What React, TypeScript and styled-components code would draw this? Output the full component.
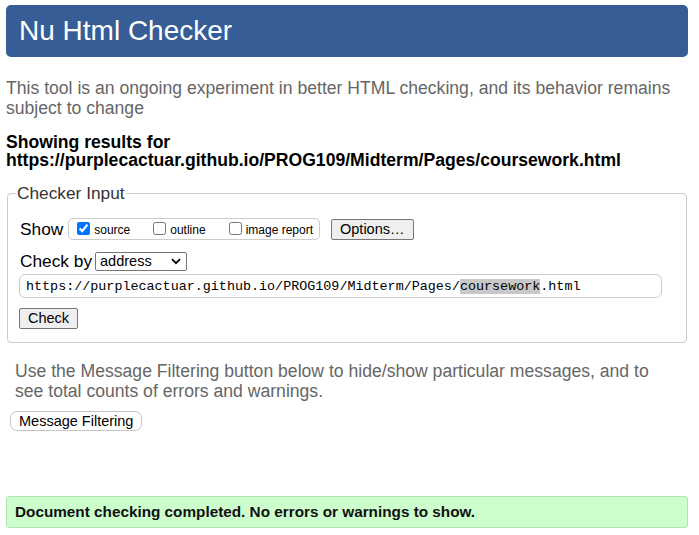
import React from "react";
import styled, { createGlobalStyle } from "styled-components";

const GlobalStyle = createGlobalStyle`
  html, body { margin: 0; padding: 0; background: #fff; }
  body { font-family: "Liberation Sans", Arial, sans-serif; color: #000; }
`;

const Page = styled.div`
  padding: 5px 11px 0 6px;
`;

const Header = styled.h1`
  margin: 0;
  height: 52px;
  line-height: 52px;
  padding-left: 13px;
  background: #365d95;
  color: #fff;
  font-size: 28px;
  font-weight: normal;
  border-radius: 5px;
`;

const Intro = styled.p<{ $indent?: number; $top?: number }>`
  margin: ${(p) => p.$top ?? 0}px 0 0;
  padding: 0 ${(p) => (p.$indent ? 20 : 0)}px 0 ${(p) => p.$indent ?? 0}px;
  color: #666;
  font-size: 17.6px;
  line-height: 20px;
`;

const Results = styled.h2`
  margin: 15px 0 0;
  font-size: 17.6px;
  font-weight: bold;
  line-height: 18px;
`;

const Fieldset = styled.fieldset`
  margin: 14px 1px 0 1px;
  padding: 14px 11px 13px 12px;
  border: 1px solid #ccc;
  border-radius: 4px;
  min-width: 0;
`;

const Legend = styled.legend`
  margin-left: -4px;
  padding: 0 1px;
  font-size: 17.3px;
  color: #333;
`;

const Row = styled.div<{ $gap?: number }>`
  display: flex;
  align-items: center;
  margin-top: ${(p) => p.$gap ?? 0}px;
`;

const Label = styled.span`
  font-size: 17.3px;
  margin-right: 2px;
`;

const CheckGroup = styled.div`
  display: flex;
  align-items: center;
  height: 20px;
  padding: 0 6px 0 4px;
  border: 1px solid #ccc;
  border-radius: 5px;
  margin-left: 3px;
`;

const CheckLabel = styled.label<{ $first?: boolean }>`
  display: flex;
  align-items: center;
  font-size: 12px;
  margin-left: ${(p) => (p.$first ? 0 : 19)}px;
  padding-top: 2px;
`;

const Box = styled.input`
  width: 13px;
  height: 13px;
  margin: -3px 4px 0 4px;
`;

const Button = styled.button<{ $round?: boolean }>`
  font-family: "Liberation Sans", Arial, sans-serif;
  font-size: 14.5px;
  color: #000;
  height: 21px;
  padding: 0 8px;
  background: ${(p) => (p.$round ? "#fff" : "#efefef")};
  border: 1px solid ${(p) => (p.$round ? "#c4c4c4" : "#767676")};
  border-radius: ${(p) => (p.$round ? "7px" : "2px")};
  line-height: 19px;
`;

const OptionsButton = styled(Button)`
  margin-left: 11px;
`;

const SelectWrap = styled.span`
  position: relative;
  display: inline-flex;
  align-items: center;
  margin-left: 1px;
`;

const Select = styled.select`
  appearance: none;
  -webkit-appearance: none;
  width: 92px;
  height: 19px;
  padding: 0 0 0 4px;
  font-family: "Liberation Sans", Arial, sans-serif;
  font-size: 14.5px;
  color: #000;
  background: #fff;
  border: 1px solid #767676;
  border-radius: 2px;
  line-height: 17px;
`;

const Chevron = styled.svg`
  position: absolute;
  right: 6px;
  top: 6px;
  pointer-events: none;
`;

const UrlField = styled.div`
  margin: 2px 13px 0 -1px;
  height: 24px;
  box-sizing: border-box;
  border: 1px solid #ccc;
  border-radius: 6px;
  padding: 0 6px;
  display: flex;
  align-items: center;
  font-family: "Liberation Mono", "DejaVu Sans Mono", monospace;
  font-size: 13.4px;
  white-space: nowrap;
`;

const Mark = styled.span`
  background: #c8c8c8;
`;

const CheckButton = styled(Button)`
  margin: 10px 0 0 -1px;
`;

const Filtering = styled.div`
  margin-top: 18px;
`;

const FilterButton = styled(Button)`
  margin: 10px 0 0 4px;
  height: 20px;
  line-height: 18px;
`;

const Success = styled.div`
  margin-top: 65px;
  height: 32px;
  box-sizing: border-box;
  padding-left: 8px;
  display: flex;
  align-items: center;
  background: #ccffcc;
  border: 1px solid #b8e0b8;
  border-radius: 3px;
  font-size: 15.3px;
  font-weight: bold;
  color: #111;
`;

export default function App() {
  return (
    <>
      <GlobalStyle />
      <Page>
        <Header>Nu Html Checker</Header>
        <Intro $top={21}>
          This tool is an ongoing experiment in better HTML checking, and its behavior remains subject to change
        </Intro>
        <Results>
          Showing results for
          <br />
          https://purplecactuar.github.io/PROG109/Midterm/Pages/coursework.html
        </Results>
        <Fieldset>
          <Legend>Checker Input</Legend>
          <Row>
            <Label>Show</Label>
            <CheckGroup>
              <CheckLabel $first>
                <Box type="checkbox" defaultChecked />
                source
              </CheckLabel>
              <CheckLabel>
                <Box type="checkbox" />
                outline
              </CheckLabel>
              <CheckLabel>
                <Box type="checkbox" />
                image report
              </CheckLabel>
            </CheckGroup>
            <OptionsButton>Options…</OptionsButton>
          </Row>
          <Row $gap={11}>
            <Label>Check by</Label>
            <SelectWrap>
              <Select defaultValue="address">
                <option value="address">address</option>
                <option value="file">file upload</option>
                <option value="text">text input</option>
              </Select>
              <Chevron width="10" height="7" viewBox="0 0 10 7">
                <path d="M1 1.2 L5 5.2 L9 1.2" fill="none" stroke="#000" strokeWidth="1.8" />
              </Chevron>
            </SelectWrap>
          </Row>
          <UrlField>
            https://purplecactuar.github.io/PROG109/Midterm/Pages/<Mark>coursework</Mark>.html
          </UrlField>
          <CheckButton>Check</CheckButton>
        </Fieldset>
        <Filtering>
          <Intro $indent={9}>
            Use the Message Filtering button below to hide/show particular messages, and to see total counts of errors and warnings.
          </Intro>
          <FilterButton $round>Message Filtering</FilterButton>
        </Filtering>
        <Success>Document checking completed. No errors or warnings to show.</Success>
      </Page>
    </>
  );
}
